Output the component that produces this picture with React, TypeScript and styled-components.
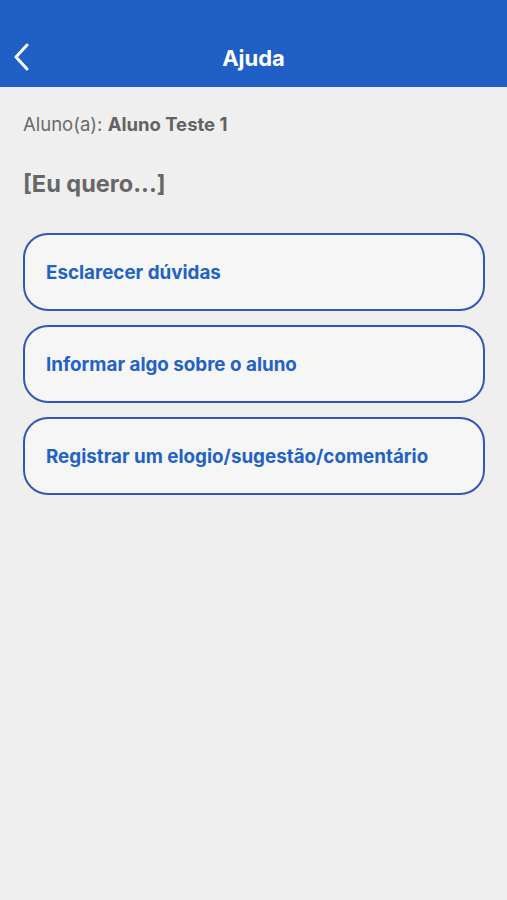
import * as React from 'react';
import styled, { createGlobalStyle } from 'styled-components';

const GlobalStyle = createGlobalStyle`
    html, body {
        margin: 0;
        padding: 0;
        background: #efefef;
    }
    body {
        font-family: Inter, Roboto, "Noto Sans", sans-serif;
    }
`;

const Page = styled.div`
    min-height: 900px;
    background: #efefef;
    display: flex;
    flex-direction: column;
`;

const Header = styled.header`
    height: 87px;
    background: #1f5fc6;
    display: flex;
    align-items: flex-end;
    justify-content: center;
    position: relative;
    box-sizing: border-box;
    padding-bottom: 16px;
`;

const BackButton = styled.button`
    position: absolute;
    left: 8px;
    bottom: 14px;
    width: 26px;
    height: 32px;
    padding: 0;
    border: none;
    background: transparent;
    display: flex;
    align-items: center;
    justify-content: center;
`;

const Title = styled.h1`
    margin: 0;
    color: #fff;
    font-size: 22px;
    font-weight: 700;
    line-height: 26px;
`;

const Content = styled.main`
    padding: 25px 22px 0 23px;
    display: flex;
    flex-direction: column;
`;

const Student = styled.p`
    margin: 0;
    color: #6a6a6a;
    font-size: 18.5px;
    line-height: 24px;
    span {
        font-weight: 700;
        color: #636363;
    }
`;

const Heading = styled.h2`
    margin: 34px 0 0;
    color: #676767;
    font-size: 23.5px;
    font-weight: 700;
    line-height: 28px;
`;

const Options = styled.div`
    margin-top: 35px;
    display: flex;
    flex-direction: column;
    gap: 14px;
`;

const Option = styled.button`
    height: 78px;
    box-sizing: border-box;
    border: 2px solid #3158b9;
    border-radius: 25px;
    background: #f6f6f6;
    padding: 0 21px;
    text-align: left;
    font-family: inherit;
    font-size: 18.8px;
    font-weight: 700;
    color: #2262c4;
    cursor: pointer;
`;

const options = [
    'Esclarecer dúvidas',
    'Informar algo sobre o aluno',
    'Registrar um elogio/sugestão/comentário',
];

export default function App() {
    return (
        <Page>
            <GlobalStyle />
            <Header>
                <BackButton aria-label="Voltar">
                    <svg width="18" height="28" viewBox="0 0 18 28" fill="none">
                        <path d="M15 2 L4 14 L15 26" stroke="#fff" strokeWidth="3" strokeLinecap="round" strokeLinejoin="round" />
                    </svg>
                </BackButton>
                <Title>Ajuda</Title>
            </Header>
            <Content>
                <Student>Aluno(a): <span>Aluno Teste 1</span></Student>
                <Heading>[Eu quero...]</Heading>
                <Options>
                    {options.map(o => <Option key={o}>{o}</Option>)}
                </Options>
            </Content>
        </Page>
    );
}
